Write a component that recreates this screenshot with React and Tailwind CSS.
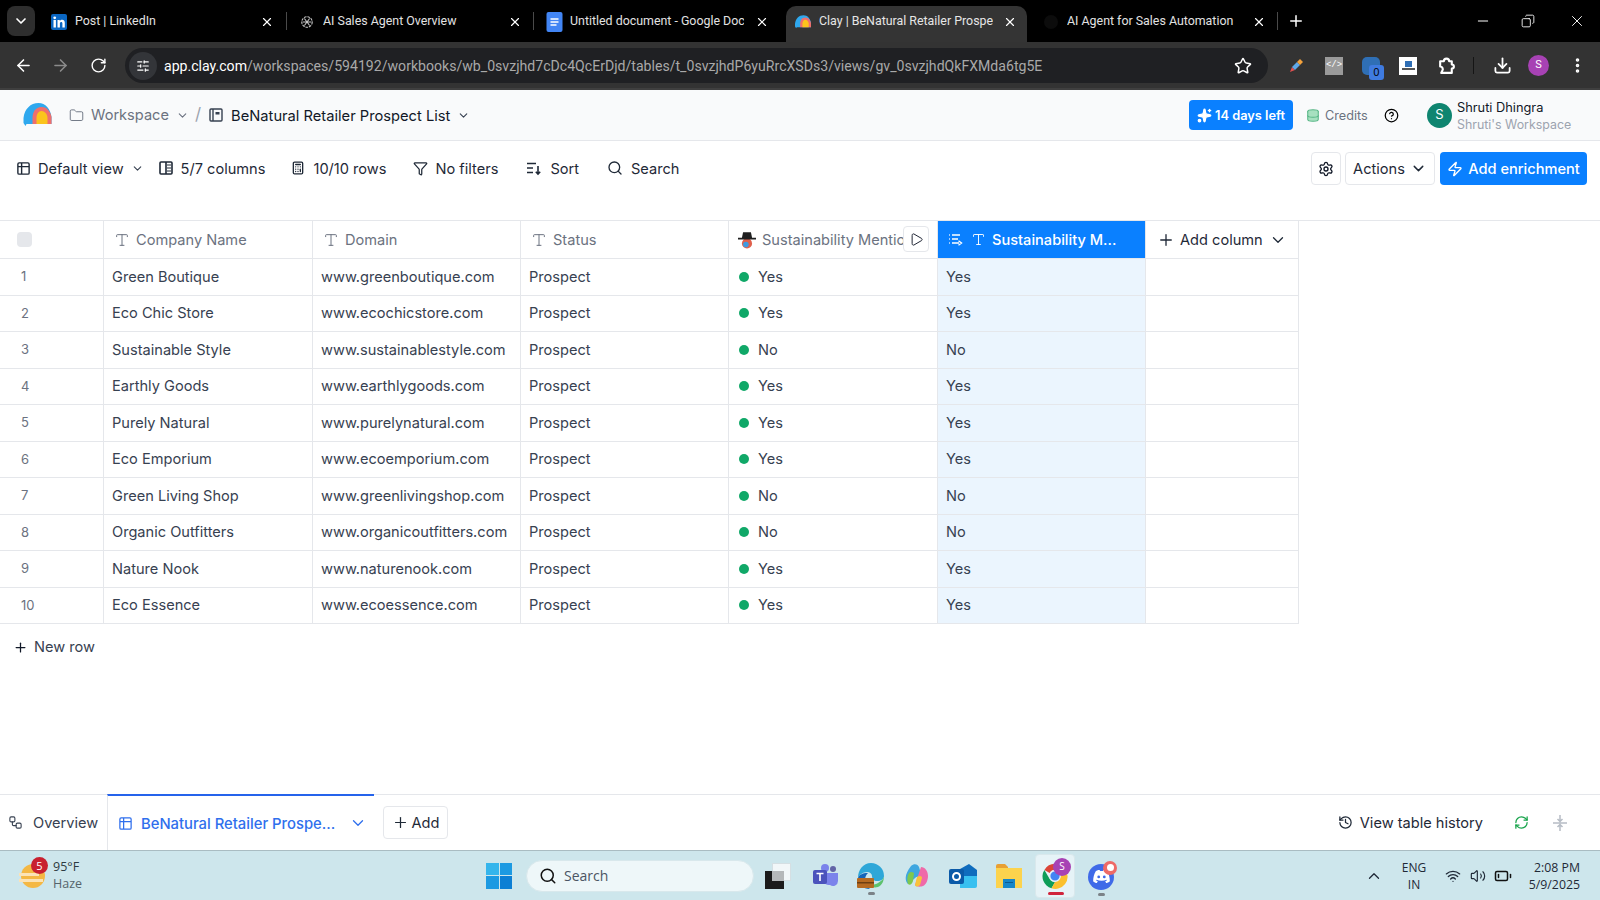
import React from 'react';
import {
  ArrowLeft, ArrowRight, RotateCw, Star, ChevronDown, ChevronUp, X, Plus, Minus, Search, Folder,
  Table2, Calculator, Filter, Settings, Play, Zap, History, RefreshCw, Sparkles,
  CircleHelp, Download, EllipsisVertical, Wifi, Volume2, BatteryLow, Workflow, SlidersHorizontal,
  Type, Database, Copy,
} from 'lucide-react';

const rows = [
  ['Green Boutique', 'www.greenboutique.com', 'Yes'],
  ['Eco Chic Store', 'www.ecochicstore.com', 'Yes'],
  ['Sustainable Style', 'www.sustainablestyle.com', 'No'],
  ['Earthly Goods', 'www.earthlygoods.com', 'Yes'],
  ['Purely Natural', 'www.purelynatural.com', 'Yes'],
  ['Eco Emporium', 'www.ecoemporium.com', 'Yes'],
  ['Green Living Shop', 'www.greenlivingshop.com', 'No'],
  ['Organic Outfitters', 'www.organicoutfitters.com', 'No'],
  ['Nature Nook', 'www.naturenook.com', 'Yes'],
  ['Eco Essence', 'www.ecoessence.com', 'Yes'],
];

const ClayLogo = ({ className }) => (
  <svg viewBox="0 0 28 24" className={className}>
    <path d="M0 15C1 6 7 0 15 0c7 0 12 6 13 14v7H3l-1 2-2-3z" fill="#2fa8ee" />
    <path d="M9 21v-6c0-6 3-11 9-11s9 5 10 10v7z" fill="#ef6f6c" />
    <path d="M13 21v-6c0-4 2-7 5-7s6 3 6 7v6z" fill="#fbc41c" />
  </svg>
);

const LinkedInIcon = () => (
  <svg viewBox="0 0 16 16" className="w-4 h-4 shrink-0">
    <rect width="16" height="16" rx="2" fill="#0a66c2" />
    <rect x="2.5" y="6" width="2.4" height="7.5" fill="#fff" />
    <circle cx="3.7" cy="3.8" r="1.4" fill="#fff" />
    <path d="M6.5 6h2.3v1.1c.5-.8 1.4-1.300 2.400-1.300 2 0 2.600 1.300 2.600 3.300v4.400h-2.400V9.600c0-1-.3-1.700-1.200-1.700-1 0-1.300.8-1.300 1.700v3.900H6.500z" fill="#fff" />
  </svg>
);

const OpenAiIcon = () => (
  <svg viewBox="0 0 16 16" className="w-[14px] h-[14px] shrink-0" fill="none" stroke="#c8c8c8" strokeWidth="1.2">
    <circle cx="8" cy="8" r="6" strokeDasharray="3 1" />
    <path d="M5 4l6 8M11 4l-6 8M3 8h10" />
  </svg>
);

const DocsIcon = () => (
  <svg viewBox="0 0 16 20" className="w-[17px] h-[20px] shrink-0">
    <rect width="16" height="20" rx="2" fill="#4285f4" />
    <path d="M4 7h8M4 10h8M4 13h6" stroke="#fff" strokeWidth="1.5" />
  </svg>
);

const ChromeIcon = ({ className }) => (
  <svg viewBox="0 0 32 32" className={className}>
    <path d="M16 2a14 14 0 0 1 12.100 7H16a7 7 0 0 0-6.100 3.500L3.900 9A14 14 0 0 1 16 2z" fill="#db4437" />
    <path d="M3.900 9l6 10.500A7 7 0 0 0 16 23l-4 7A14 14 0 0 1 3.900 9z" fill="#0f9d58" />
    <path d="M28.100 9A14 14 0 0 1 12 30l6-10.500A7 7 0 0 0 16 9z" fill="#fbc02d" />
    <circle cx="16" cy="16" r="6" fill="#4285f4" stroke="#e6f3f7" strokeWidth="1.5" />
  </svg>
);

const SortIcon = () => (
  <svg viewBox="0 0 16 16" className="w-4 h-4 shrink-0" fill="none" stroke="#1f2937" strokeWidth="1.6">
    <path d="M1 3.500h9M1 8h6M1 12.500h6M12 6v8M9.800 11.800L12 14l2.200-2.200" />
  </svg>
);

const ColumnsIcon = () => (
  <svg viewBox="0 0 14 14" className="w-[14px] h-[14px] shrink-0" fill="none" stroke="#1f2937" strokeWidth="1.6">
    <rect x="1" y="1" width="12" height="12" rx="1" />
    <path d="M7 1v12" />
    <path d="M8 4h4M8 7h4M8 10h4" strokeWidth="1.2" />
  </svg>
);

const EnrichIcon = () => (
  <svg viewBox="0 0 16 16" className="w-4 h-4 shrink-0" fill="none" stroke="#fff" strokeWidth="1.4">
    <path d="M1 3h.8M1 7h.8M1 11h.8M4 3h8M4 7h6M4 11h7M10.500 8.800L13.500 11l-3 2.200" />
  </svg>
);

const ExtensionIcon = () => (
  <svg viewBox="0 0 18 18" className="w-[19px] h-[19px] ml-[20px] shrink-0" fill="none" stroke="#fff" strokeWidth="2" strokeLinejoin="round">
    <path d="M3 5h3.500a2.500 2.500 0 0 1 5 0H14v3a2 2 0 0 1 0 4v4H4l1-2a2.500 2.500 0 0 0-2-4z" />
  </svg>
);

const Tab = ({ className, icon, label, labelClass, active, sep }) => (
  <div className={`relative flex items-center h-[36px] pb-[5px] shrink-0 ${className} ${active ? 'bg-[#343434] rounded-t-[10px]' : ''}`}>
    <span className="w-4 h-4 flex items-center justify-center shrink-0">{icon}</span>
    <span className={`ml-2 overflow-hidden whitespace-nowrap text-[12.4px] font-['Roboto',sans-serif] ${labelClass} ${active ? 'text-[#e6e6e6]' : 'text-[#e2e2e2]'}`}>{label}</span>
    <X className="w-[14px] h-[14px] text-white ml-auto shrink-0" strokeWidth={2} />
    {sep && <span className="absolute right-0 top-[6px] w-px h-[18px] bg-[#4a4a4a]" />}
  </div>
);

const BrowserTabs = () => (
  <div className="h-[42px] bg-black flex items-end shrink-0 relative">
    <div className="w-[28px] h-[30px] ml-[7px] mr-[5px] mb-[6px] rounded-lg bg-[#2e2e2e] flex items-center justify-center shrink-0">
      <ChevronDown className="w-4 h-4 text-white" strokeWidth={2.5} />
    </div>
    <Tab className="w-[247px] pl-[11px] pr-[13px]" icon={<LinkedInIcon />} label="Post | LinkedIn" labelClass="w-[170px]" sep />
    <Tab className="w-[247px] pl-3 pr-3" icon={<OpenAiIcon />} label="AI Sales Agent Overview" labelClass="w-[170px]" sep />
    <Tab className="w-[252px] pl-3 pr-[17px]" icon={<DocsIcon />} label="Untitled document - Google Docs" labelClass="w-[174px]" />
    <Tab className="w-[241px] pl-[9px] pr-[10px]" active icon={<ClayLogo className="w-4 h-[14px]" />} label="Clay | BeNatural Retailer Prospect List" labelClass="w-[174px]" />
    <Tab className="w-[251px] pl-[16px] pr-3" icon={<span className="w-[14px] h-[14px] rounded-full bg-[#0c0c0c]" />} label="AI Agent for Sales Automation" labelClass="w-[172px]" sep />
    <Plus className="w-[18px] h-[18px] text-white ml-[9px] mb-[12px] shrink-0" strokeWidth={2} />
    <div className="ml-auto flex items-center h-[42px] pr-[14px] text-white">
      <Minus className="w-4 h-4 mr-[30px]" strokeWidth={1.5} />
      <Copy className="w-[14px] h-[14px] mr-[33px] -scale-x-100" strokeWidth={1.5} />
      <X className="w-[18px] h-[18px]" strokeWidth={1.25} />
    </div>
  </div>
);

const AddressBar = () => (
  <div className="h-[48px] bg-[#333333] flex items-center shrink-0 border-b-2 border-[#3f3f3f] text-white pt-px">
    <ArrowLeft className="w-[19px] h-[19px] ml-[14px]" strokeWidth={2} />
    <ArrowRight className="w-[19px] h-[19px] ml-[18px] text-[#8b8b8b]" strokeWidth={2} />
    <RotateCw className="w-[17px] h-[17px] ml-[20px]" strokeWidth={2} />
    <div className="ml-[18px] w-[1143px] h-[35px] rounded-full bg-[#1f2023] flex items-center pr-[16px]">
      <span className="w-[28px] h-[28px] ml-[4px] rounded-full bg-[#333539] flex items-center justify-center">
        <SlidersHorizontal className="w-[14px] h-[14px]" strokeWidth={2} />
      </span>
      <span className="ml-[7px] pt-[2px] text-[14.1px] whitespace-nowrap font-['Roboto',sans-serif] text-[#a9a9a9]">
        <span className="text-white">app.clay.com</span>/workspaces/594192/workbooks/wb_0svzjhd7cDc4QcErDjd/tables/t_0svzjhdP6yuRrcXSDs3/views/gv_0svzjhdQkFXMda6tg5E
      </span>
      <Star className="w-[18px] h-[18px] ml-auto" strokeWidth={2} />
    </div>
    <svg viewBox="0 0 16 16" className="w-4 h-4 ml-[20px] shrink-0">
      <path d="M2 14l2-5 3 3z" fill="#e05050" />
      <path d="M4 9l5-5 3 3-5 5z" fill="#5fa8e8" />
      <path d="M9 4l3-3 3 3-3 3z" fill="#f4a23c" />
    </svg>
    <span className="w-[18px] h-[18px] ml-[21px] bg-[#9a9a9a] text-[9px] text-white flex items-center justify-center font-['Liberation_Mono',monospace]">&lt;/&gt;</span>
    <span className="relative w-[18px] h-[18px] ml-[19px] rounded-[5px] bg-[#2f6fb5] flex items-center justify-center">
      <span className="absolute left-[7px] top-[8px] w-[15px] h-[15px] rounded-[3px] bg-[#3f7be0] text-[10px] leading-[15px] text-center text-black">0</span>
    </span>
    <span className="w-[18px] h-[18px] ml-[19px] bg-white flex flex-col items-center justify-center">
      <span className="w-[7px] h-[6px] bg-[#2f6fb5]" />
      <span className="w-[13px] h-[2px] mt-px bg-[#555]" />
    </span>
    <ExtensionIcon />
    <span className="w-px h-[17px] ml-[17px] bg-[#151515]" />
    <Download className="w-[19px] h-[19px] ml-[19px]" strokeWidth={2.25} />
    <span className="w-[21px] h-[21px] ml-[16px] rounded-full bg-[#a742b4] text-[11px] flex items-center justify-center font-['Roboto',sans-serif]">S</span>
    <EllipsisVertical className="w-[19px] h-[19px] ml-[19px]" strokeWidth={2.5} />
  </div>
);

const AppHeader = () => (
  <div className="h-[51px] bg-[#f9fafb] border-b border-[#e5e7eb] flex items-center shrink-0 pl-[23px] pr-[30px]">
    <ClayLogo className="w-[29px] h-[24px] shrink-0" />
    <Folder className="w-[15px] h-[15px] ml-[17px] text-[#6b7280]" strokeWidth={1.5} />
    <span className="ml-[7px] pt-[2px] text-[14.6px] text-[#6b7280]">Workspace</span>
    <ChevronDown className="w-[13px] h-[13px] ml-[7px] text-[#6b7280]" />
    <span className="ml-[6px] text-[17px] text-[#9ca3af]">/</span>
    <svg viewBox="0 0 14 14" className="w-[14px] h-[14px] ml-[8px] shrink-0" fill="none" stroke="#374151" strokeWidth="1.4">
      <rect x="1" y="1" width="12" height="12" rx="1" />
      <path d="M4 1v12" />
      <rect x="6.500" y="4" width="4" height="2.500" fill="#374151" stroke="none" />
    </svg>
    <span className="ml-[8px] pt-[2px] text-[14.7px] text-[#111827]">BeNatural Retailer Prospect List</span>
    <ChevronDown className="w-[13px] h-[13px] ml-[7px] text-[#374151]" />
    <div className="ml-auto h-[30px] w-[104px] rounded bg-[#0a80ff] flex items-center justify-center text-white text-[12.8px] font-semibold whitespace-nowrap">
      <Sparkles className="w-[15px] h-[15px] mr-[3px] fill-white" />
      <span className="pt-px">14 days left</span>
    </div>
    <Database className="w-[14px] h-[19px] ml-[13px] text-[#55b584] fill-[#a7e0c0]" strokeWidth={1.75} />
    <span className="ml-[5px] pt-[2px] w-[44px] text-[12.7px] text-[#6b7280]">Credits</span>
    <CircleHelp className="w-[15px] h-[15px] ml-[15px] text-black" strokeWidth={2} />
    <span className="w-[25px] h-[25px] ml-[28px] rounded-full bg-[#0f8570] text-white text-[13px] flex items-center justify-center">S</span>
    <div className="ml-[5px] flex flex-col w-[113px] whitespace-nowrap pt-px">
      <span className="text-[12.8px] leading-[17px] text-[#111827]">Shruti Dhingra</span>
      <span className="text-[12.4px] leading-[17px] text-[#9ca3af]">Shruti's Workspace</span>
    </div>
  </div>
);

const ToolItem = ({ icon, label, className = '' }) => (
  <div className={`flex items-center text-[14.6px] text-[#1f2937] ${className}`}>
    {icon}
    <span className="pt-[2px] whitespace-nowrap">{label}</span>
  </div>
);

const ViewBar = () => (
  <div className="h-[79px] flex items-start pt-[11px] pl-[16px] pr-[13px] shrink-0">
    <div className="h-[33px] flex items-center">
      <ToolItem className="gap-[7px]" icon={<Table2 className="w-[15px] h-[15px]" strokeWidth={2.25} />} label="Default view" />
      <ChevronDown className="w-[13px] h-[13px] ml-[7px] text-[#374151]" />
      <ToolItem className="ml-[15px] gap-2" icon={<ColumnsIcon />} label="5/7 columns" />
      <ToolItem className="ml-[26px] gap-2" icon={<Calculator className="w-[14px] h-[14px]" strokeWidth={2.25} />} label="10/10 rows" />
      <ToolItem className="ml-[26px] gap-2" icon={<Filter className="w-[15px] h-[15px]" strokeWidth={2} />} label="No filters" />
      <ToolItem className="ml-[28px] gap-2" icon={<SortIcon />} label="Sort" />
      <ToolItem className="ml-[28px] gap-2" icon={<Search className="w-4 h-4" strokeWidth={2} />} label="Search" />
    </div>
    <button className="ml-auto w-[30px] h-[33px] rounded border border-[#e5e7eb] flex items-center justify-center">
      <Settings className="w-4 h-4 text-[#111827]" strokeWidth={2} />
    </button>
    <button className="ml-[4px] w-[90px] h-[33px] rounded border border-[#e5e7eb] flex items-center justify-center text-[14.6px] text-[#1f2937]">
      <span className="pt-[2px]">Actions</span>
      <ChevronDown className="w-[17px] h-[17px] ml-[5px]" />
    </button>
    <button className="ml-[5px] w-[147px] h-[33px] rounded bg-[#0a80ff] flex items-center justify-center text-[14.6px] font-medium text-white">
      <Zap className="w-4 h-4 mr-[5px]" strokeWidth={2} />
      <span className="pt-[2px]">Add enrichment</span>
    </button>
  </div>
);

const gridCols = 'grid grid-cols-[104px_209px_208px_208px_209px_208px_153px] w-[1299px]';
const cell = 'border-r border-b border-[#e5e7eb] flex items-center min-w-0';

const HeadCell = ({ label }) => (
  <div className={`${cell} pl-[10px] text-[14.6px] text-[#6b7280]`}>
    <Type className="w-4 h-4 mr-[6px] text-[#6b7280]" strokeWidth={1.5} />
    <span className="pt-[2px]">{label}</span>
  </div>
);

const DataTable = () => (
  <div className="border-t border-[#e5e7eb]">
    <div className={`${gridCols} h-[38px]`}>
      <div className={`${cell} pl-[17px]`}>
        <span className="w-[15px] h-[15px] rounded bg-[#e5e7eb]" />
      </div>
      <HeadCell label="Company Name" />
      <HeadCell label="Domain" />
      <HeadCell label="Status" />
      <div className={`${cell} relative pl-[9px] text-[14.6px] text-[#6b7280] overflow-hidden whitespace-nowrap`}>
        <svg viewBox="0 0 16 16" className="w-[18px] h-[18px] mr-[6px] shrink-0">
          <circle cx="8" cy="11" r="4.500" fill="#e0604c" />
          <circle cx="7" cy="12" r="2.500" fill="#3f9ae0" />
          <path d="M4.500 1h7l1 5H16v1.500H0V6h3.500z" fill="#1f1f1f" />
        </svg>
        <span className="w-[141px] overflow-hidden shrink-0 pt-[2px]">Sustainability Mentions</span>
        <span className="absolute right-[8px] top-[5px] w-[26px] h-[26px] bg-white border border-[#e5e7eb] rounded flex items-center justify-center">
          <Play className="w-[15px] h-[15px] text-[#111827]" strokeWidth={1.5} />
        </span>
      </div>
      <div className="border-b border-r border-[#e5e7eb] bg-[#0a80ff] text-white font-medium text-[14.6px] flex items-center pl-[10px] whitespace-nowrap">
        <EnrichIcon />
        <Type className="w-[15px] h-[15px] ml-[7px] mr-[6px]" strokeWidth={1.5} />
        <span className="pt-[2px]">Sustainability M...</span>
      </div>
      <div className={`${cell} pl-[11px] text-[14.6px] text-[#1f2937]`}>
        <Plus className="w-[18px] h-[18px] mr-[5px]" strokeWidth={1.75} />
        <span className="pt-[2px]">Add column</span>
        <ChevronDown className="w-[18px] h-[18px] ml-[6px]" strokeWidth={1.75} />
      </div>
    </div>
    {rows.map(([name, domain, mention], i) => (
      <div key={name} className={`${gridCols} h-[36.5px] text-[14.6px] text-[#374151]`}>
        <div className={`${cell} pl-[21px] text-[13px] text-[#6b7280]`}>{i + 1}</div>
        <div className={`${cell} pl-2 pt-[2px]`}>{name}</div>
        <div className={`${cell} pl-2 pt-[2px]`}>{domain}</div>
        <div className={`${cell} pl-2 pt-[2px]`}>Prospect</div>
        <div className={`${cell} pl-[10px] pt-[2px]`}>
          <span className="w-[10px] h-[10px] rounded-full bg-[#10a868] mr-[9px] -mt-[2px]" />
          {mention}
        </div>
        <div className={`${cell} pl-2 pt-[2px] bg-[#ebf5fe]`}>{mention}</div>
        <div className={cell} />
      </div>
    ))}
    <div className="flex items-center h-[46px] pl-[13px] text-[14.6px] text-[#374151]">
      <Plus className="w-[15px] h-[15px] mr-[6px] text-[#111827]" strokeWidth={2} />
      <span className="pt-[2px]">New row</span>
    </div>
  </div>
);

const BottomTabs = () => (
  <div className="h-[56px] border-t border-[#e5e7eb] flex items-stretch shrink-0 bg-white">
    <div className="w-[107px] flex items-center pl-[8px] text-[14.6px] text-[#374151]">
      <Workflow className="w-[15px] h-[15px] mr-[10px]" strokeWidth={1.75} />
      <span className="pt-[2px]">Overview</span>
    </div>
    <div className="w-[267px] border-t-2 border-[#2563eb] border-l border-l-[#e5e7eb] -mt-px flex items-center pl-[10px] text-[14.8px] font-medium text-[#2f6fed]">
      <Table2 className="w-[15px] h-[15px] mr-[8px]" strokeWidth={2} />
      <span className="pt-[2px]">BeNatural Retailer Prospe...</span>
      <ChevronDown className="w-[18px] h-[18px] ml-[14px]" strokeWidth={1.75} />
    </div>
    <div className="ml-[9px] self-center w-[65px] h-[33px] rounded border border-[#e5e7eb] flex items-center justify-center text-[14.6px] text-[#1f2937]">
      <Plus className="w-[17px] h-[17px] mr-[3px]" strokeWidth={1.75} />
      <span className="pt-[2px]">Add</span>
    </div>
    <div className="ml-auto flex items-center pr-[33px] text-[14.6px] text-[#1f2937]">
      <History className="w-[15px] h-[15px] mr-[7px]" strokeWidth={2} />
      <span className="pt-[2px]">View table history</span>
      <RefreshCw className="w-[15px] h-[15px] ml-[31px] text-[#16a34a]" strokeWidth={2} />
      <svg viewBox="0 0 14 16" className="w-[14px] h-4 ml-[24px]" fill="none" stroke="#b6bcc5" strokeWidth="1.5">
        <path d="M7 0v6M4.500 4L7 6.500 9.500 4M0 8h14M7 16v-6M4.500 12L7 9.500 9.500 12" />
      </svg>
    </div>
  </div>
);

const TaskbarIcons = () => (
  <>
    <div className="relative w-[26px] h-[26px] ml-[11px] shrink-0">
      <span className="absolute right-0 top-0 w-[19px] h-[18px] bg-[#f2f7f9] border border-[#d5dfe3]" />
      <span className="absolute left-0 bottom-0 w-[19px] h-[18px] bg-[#1b1b1b]" />
      <span className="absolute left-[7px] top-[8px] w-[12px] h-[10px] bg-[#b5b8ba]" />
    </div>
    <svg viewBox="0 0 26 24" className="w-[26px] h-[24px] ml-[22px] shrink-0">
      <circle cx="20" cy="5" r="3" fill="#6264a7" />
      <circle cx="12" cy="4" r="4" fill="#7b83eb" />
      <path d="M10 9h15v8a5 5 0 0 1-8 4 6 6 0 0 1-7-5z" fill="#7b83eb" />
      <rect x="0" y="6" width="14" height="14" rx="2" fill="#4b53bc" />
      <path d="M3.500 9.500h7M7 9.500V17" stroke="#fff" strokeWidth="1.6" />
    </svg>
    <div className="relative w-[28px] h-[34px] ml-[18px] mt-[6px] shrink-0 flex flex-col items-center">
      <svg viewBox="0 0 28 28" className="w-[28px] h-[28px]">
        <path d="M14 1a13 13 0 0 1 13 13c0 3-3 5-7 5-3 0-5-2-5-5 0-2-2-4-5-4-4 0-8 3-9 6C1 8 6 1 14 1z" fill="#2ea7d8" />
        <path d="M27 14c0 5-2 9-6 11-4 1-8 0-9-3 2 1 6 1 9-1 3-2 6-4 6-7z" fill="#5dc26d" />
        <path d="M1 16c0 6 5 11 12 11-3-2-5-5-5-9 0-3 1-5 3-7-6 0-9 2-10 5z" fill="#1565b8" />
        <rect x="0" y="16" width="17" height="10" rx="1" fill="#b56a22" />
        <rect x="0" y="20" width="17" height="1.5" fill="#6e3f12" />
      </svg>
      <span className="w-[7px] h-[3px] rounded-full bg-[#7b8287] mt-[2px]" />
    </div>
    <svg viewBox="0 0 26 26" className="w-[26px] h-[26px] ml-[19px] shrink-0">
      <path d="M7 3c3-3 7-2 8 1l3 10c-2-1-6-1-8 2L4 21c-3-3-4-9 3-18z" fill="#3fa7e0" />
      <path d="M4 12c1-3 3-4 6-2l-1 8c-1 3-3 5-5 3-1-3-1-6 0-9z" fill="#7ec850" />
      <path d="M17 4c4 0 7 4 7 9 0 4-2 9-5 10-2 1-7 1-8-1l3-9c1-3 2-6 3-9z" fill="#ef6aa8" />
      <path d="M13 14c3-2 5-1 5 1l-2 7c-2 2-4 2-5 0z" fill="#f9c23c" />
    </svg>
    <svg viewBox="0 0 28 24" className="w-[28px] h-[24px] ml-[19px] shrink-0">
      <path d="M11 5l9-5 8 6v6H11z" fill="#0f6cbd" />
      <path d="M11 12h17v10a2 2 0 0 1-2 2H11z" fill="#38c0f0" />
      <rect x="0" y="5" width="15" height="15" rx="2" fill="#0a5aa8" />
      <circle cx="7.500" cy="12.500" r="3.500" fill="none" stroke="#fff" strokeWidth="2" />
    </svg>
    <svg viewBox="0 0 26 24" className="w-[26px] h-[24px] ml-[19px] shrink-0">
      <path d="M0 2a2 2 0 0 1 2-2h7l3 3v3H0z" fill="#e8a033" />
      <rect y="4" width="26" height="20" fill="#fcd34d" />
      <rect x="7" y="15" width="12" height="9" fill="#1686c8" />
      <rect x="9" y="18" width="8" height="1" fill="#0b5a90" />
    </svg>
    <div className="relative w-[40px] h-[44px] ml-[13px] rounded-[4px] bg-[#e6f3f7] border border-[#d9e8ec] flex items-center justify-center shrink-0">
      <ChromeIcon className="w-[28px] h-[28px]" />
      <span className="absolute right-[3px] top-[3px] w-[18px] h-[18px] rounded-full bg-[#a742b4] text-white text-[10px] flex items-center justify-center">S</span>
      <span className="absolute bottom-[2px] left-[12px] w-[16px] h-[3px] rounded-full bg-[#d0243c]" />
    </div>
    <div className="relative w-[28px] h-[34px] ml-[12px] mt-[6px] shrink-0 flex flex-col items-center">
      <span className="w-[26px] h-[26px] rounded-full bg-[#3f6ae8] flex items-center justify-center mt-[2px]">
        <svg viewBox="0 0 18 14" className="w-[17px] h-[13px]">
          <path d="M3 1c2-1 3-1 4-1l.5 1h3L11 0c1 0 2 0 4 1 2 3 3 7 3 11-1 1-3 2-4 2l-1-2 2-1-.5-.5C11 12 7 12 3.500 10.500L3 11l2 1-1 2c-1 0-3-1-4-2 0-4 1-8 3-11z" fill="#fff" />
          <circle cx="6" cy="7.500" r="1.5" fill="#3f6ae8" />
          <circle cx="12" cy="7.500" r="1.5" fill="#3f6ae8" />
        </svg>
      </span>
      <span className="absolute -right-[2px] -top-[1px] w-[14px] h-[14px] rounded-full bg-[#ee6a66] flex items-center justify-center">
        <span className="w-[7px] h-[7px] rounded-full bg-white" />
      </span>
      <span className="w-[7px] h-[3px] rounded-full bg-[#7b8287] mt-[3px]" />
    </div>
  </>
);

const Taskbar = () => (
  <div className="h-[50px] bg-[#cde6ec] border-t border-[#a9bcc2] flex items-center shrink-0 font-['Open_Sans',sans-serif]">
    <div className="relative w-[24px] h-[24px] ml-[21px] rounded-full bg-[#f4b844] shrink-0">
      <span className="absolute left-[-2px] top-[9px] w-[20px] h-[3px] bg-[#fbe3b6]" />
      <span className="absolute left-[-2px] top-[15px] w-[24px] h-[3px] bg-[#fbe3b6]" />
      <span className="absolute left-[10px] -top-[7px] w-[17px] h-[17px] rounded-full bg-[#c8202f] text-white text-[11px] leading-[17px] text-center">5</span>
    </div>
    <div className="ml-[8px] w-[100px] flex flex-col text-[12.5px] leading-[17px] text-[#2e3a40] -mt-[2px]">
      <span>95°F</span>
      <span className="text-[#55646b]">Haze</span>
    </div>
    <div className="ml-[333px] grid grid-cols-2 gap-px w-[26px] h-[26px] shrink-0">
      <span className="bg-[#34b5ec]" />
      <span className="bg-[#1c9ae2]" />
      <span className="bg-[#1c9ae2]" />
      <span className="bg-[#0c7fd4]" />
    </div>
    <div className="ml-[14px] w-[228px] h-[32px] rounded-full bg-[#eef7f9] border border-[#d8e8ec] flex items-center pl-[12px] text-[14px] text-[#4b5563] shrink-0">
      <Search className="w-[18px] h-[18px] mr-[7px] text-[#111]" strokeWidth={2} />
      Search
    </div>
    <TaskbarIcons />
    <ChevronUp className="w-[18px] h-[18px] ml-[250px] text-[#1f2937] shrink-0" strokeWidth={1.75} />
    <div className="ml-[16px] w-[30px] flex flex-col items-center text-[12px] leading-[17px] text-[#1f2937]">
      <span>ENG</span>
      <span>IN</span>
    </div>
    <Wifi className="w-4 h-4 ml-[16px] text-[#1f2937]" strokeWidth={2} />
    <Volume2 className="w-4 h-4 ml-[9px] text-[#1f2937]" strokeWidth={1.75} />
    <BatteryLow className="w-[18px] h-[18px] ml-[8px] text-[#111]" strokeWidth={2} />
    <div className="ml-auto pr-[20px] flex flex-col items-end text-[12.3px] leading-[17px] text-[#1f2937]">
      <span>2:08 PM</span>
      <span>5/9/2025</span>
    </div>
  </div>
);

export default function App() {
  return (
    <div className="w-[1600px] h-[900px] flex flex-col bg-white overflow-hidden font-['Inter',sans-serif]">
      <BrowserTabs />
      <AddressBar />
      <AppHeader />
      <ViewBar />
      <div className="flex-1 min-h-0 overflow-hidden">
        <DataTable />
      </div>
      <BottomTabs />
      <Taskbar />
    </div>
  );
}
